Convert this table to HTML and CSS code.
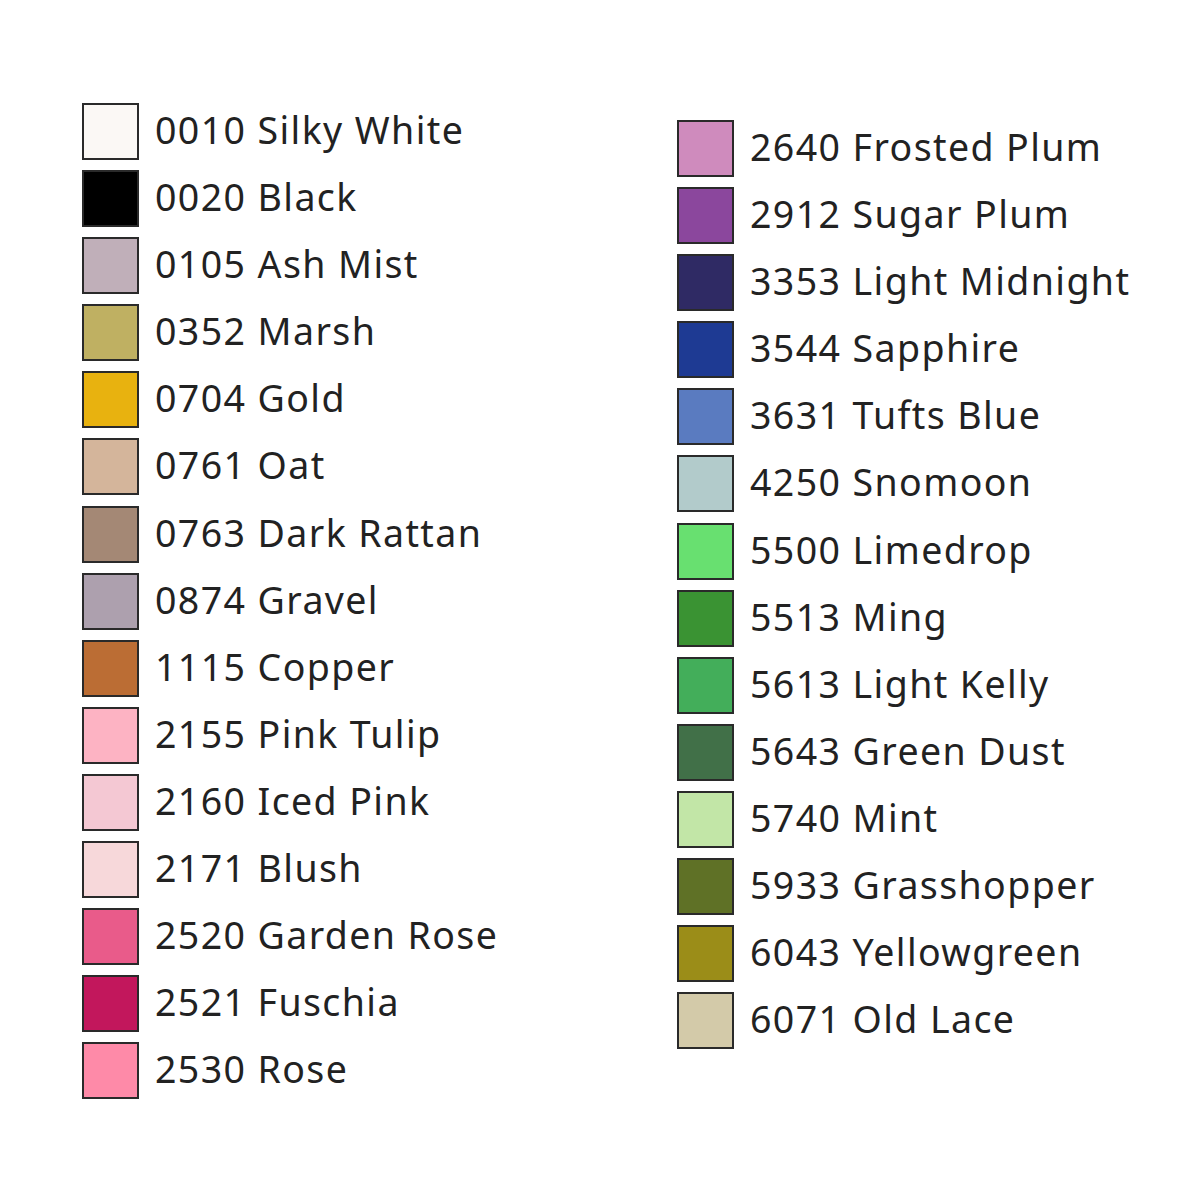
FILE: index.html
```html
<!DOCTYPE html>
<html>
<head>
<meta charset="utf-8">
<link rel="stylesheet" href="styles.css">
</head>
<body>
<div class="page">
  <ul class="col col-left">
    <li class="item"><span class="sw" style="background:#fbf8f5"></span><span class="lbl">0010 Silky White</span></li>
    <li class="item"><span class="sw" style="background:#000000"></span><span class="lbl">0020 Black</span></li>
    <li class="item"><span class="sw" style="background:#c0afb9"></span><span class="lbl">0105 Ash Mist</span></li>
    <li class="item"><span class="sw" style="background:#bfb062"></span><span class="lbl">0352 Marsh</span></li>
    <li class="item"><span class="sw" style="background:#e8b20f"></span><span class="lbl">0704 Gold</span></li>
    <li class="item"><span class="sw" style="background:#d4b59b"></span><span class="lbl">0761 Oat</span></li>
    <li class="item"><span class="sw" style="background:#a48875"></span><span class="lbl">0763 Dark Rattan</span></li>
    <li class="item"><span class="sw" style="background:#ada0ae"></span><span class="lbl">0874 Gravel</span></li>
    <li class="item"><span class="sw" style="background:#bb6d34"></span><span class="lbl">1115 Copper</span></li>
    <li class="item"><span class="sw" style="background:#fdb3c3"></span><span class="lbl">2155 Pink Tulip</span></li>
    <li class="item"><span class="sw" style="background:#f4c8d3"></span><span class="lbl">2160 Iced Pink</span></li>
    <li class="item"><span class="sw" style="background:#f7d8da"></span><span class="lbl">2171 Blush</span></li>
    <li class="item"><span class="sw" style="background:#e95b8a"></span><span class="lbl">2520 Garden Rose</span></li>
    <li class="item"><span class="sw" style="background:#c2175c"></span><span class="lbl">2521 Fuschia</span></li>
    <li class="item"><span class="sw" style="background:#fe8aa8"></span><span class="lbl">2530 Rose</span></li>
  </ul>
  <ul class="col col-right">
    <li class="item"><span class="sw" style="background:#cf8bbd"></span><span class="lbl">2640 Frosted Plum</span></li>
    <li class="item"><span class="sw" style="background:#8b479d"></span><span class="lbl">2912 Sugar Plum</span></li>
    <li class="item"><span class="sw" style="background:#2f2a64"></span><span class="lbl">3353 Light Midnight</span></li>
    <li class="item"><span class="sw" style="background:#1e3a93"></span><span class="lbl">3544 Sapphire</span></li>
    <li class="item"><span class="sw" style="background:#5a7bc0"></span><span class="lbl">3631 Tufts Blue</span></li>
    <li class="item"><span class="sw" style="background:#b2cbcb"></span><span class="lbl">4250 Snomoon</span></li>
    <li class="item"><span class="sw" style="background:#68e070"></span><span class="lbl">5500 Limedrop</span></li>
    <li class="item"><span class="sw" style="background:#3a9333"></span><span class="lbl">5513 Ming</span></li>
    <li class="item"><span class="sw" style="background:#43ae5a"></span><span class="lbl">5613 Light Kelly</span></li>
    <li class="item"><span class="sw" style="background:#417048"></span><span class="lbl">5643 Green Dust</span></li>
    <li class="item"><span class="sw" style="background:#c2e6a7"></span><span class="lbl">5740 Mint</span></li>
    <li class="item"><span class="sw" style="background:#5f7126"></span><span class="lbl">5933 Grasshopper</span></li>
    <li class="item"><span class="sw" style="background:#9b8d18"></span><span class="lbl">6043 Yellowgreen</span></li>
    <li class="item"><span class="sw" style="background:#d3caa9"></span><span class="lbl">6071 Old Lace</span></li>
  </ul>
</div>
</body>
</html>
```

FILE: styles.css
```css
html, body {
  margin: 0;
  padding: 0;
  background: #ffffff;
}
.page {
  width: 1200px;
  height: 1200px;
  display: flex;
  align-items: flex-start;
  font-family: "Noto Sans", "Open Sans", sans-serif;
  color: #222222;
}
.col {
  list-style: none;
  margin: 0;
  padding: 0;
  display: flex;
  flex-direction: column;
  gap: 10.1px;
}
.col-left {
  margin-left: 82px;
  margin-top: 103px;
  width: 595px;
}
.col-right {
  margin-top: 120px;
}
.item {
  display: flex;
  align-items: center;
  height: 57px;
}
.sw {
  box-sizing: border-box;
  width: 57px;
  height: 57px;
  border: 2px solid #2a2a2a;
  flex: none;
}
.lbl {
  margin-left: 16px;
  font-size: 37.5px;
  letter-spacing: 1.4px;
  line-height: 57px;
  white-space: nowrap;
  position: relative;
  top: -2px;
}
```
